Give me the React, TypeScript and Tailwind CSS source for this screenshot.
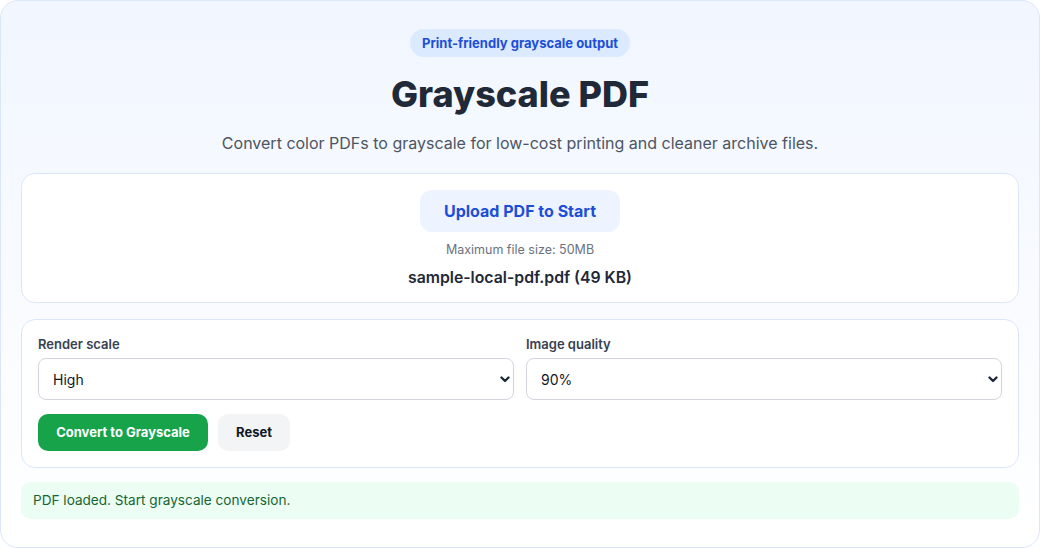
import React from "react";

function Chevron() {
  return (
    <svg
      className="pointer-events-none absolute right-[3px] top-1/2 -translate-y-1/2"
      width="12"
      height="12"
      viewBox="0 0 12 12"
      fill="none"
    >
      <path d="M2.5 4.5 L6 8 L9.5 4.5" stroke="#1f2937" strokeWidth="2.4" strokeLinecap="round" strokeLinejoin="round" />
    </svg>
  );
}

function Field({ label, value, options }: { label: string; value: string; options: string[] }) {
  return (
    <div className="flex flex-col">
      <label className="text-[13px] leading-5 font-semibold text-[#374151]">{label}</label>
      <div className="relative mt-1">
        <select
          defaultValue={value}
          className="h-[42px] w-full appearance-none rounded-lg border border-[#d1d5db] bg-white pl-[14px] pr-8 text-[14px] text-[#111827] outline-none"
        >
          {options.map((o) => (
            <option key={o}>{o}</option>
          ))}
        </select>
        <Chevron />
      </div>
    </div>
  );
}

export default function App() {
  return (
    <div
      className="h-[548px] w-[1040px] overflow-hidden bg-white"
      style={{ fontFamily: "Inter, 'Noto Sans', sans-serif" }}
    >
      <div className="flex h-[548px] flex-col rounded-[18px] border border-[#dbe6fb] bg-gradient-to-b from-[#f1f6ff] to-white px-5 pt-7">
        <div className="flex justify-center">
          <span className="rounded-full bg-[#dbeafe] px-3 py-[5px] text-[13px] leading-[18px] font-bold text-[#1d4ed8]">
            Print-friendly grayscale output
          </span>
        </div>
        <h1 className="mt-[15px] text-center text-[36px] leading-[44px] font-extrabold text-[#1f2937]">
          Grayscale PDF
        </h1>
        <p className="mt-[15px] text-center text-[16px] leading-6 text-[#4b5563]">
          Convert color PDFs to grayscale for low-cost printing and cleaner archive files.
        </p>

        <div className="mt-[18px] flex flex-col items-center rounded-[14px] border border-[#dbe6fb] bg-white pt-4 pb-[12px]">
          <button className="h-[42px] w-[200px] rounded-xl bg-[#eef4ff] text-[16px] font-bold text-[#1d4ed8]">
            Upload PDF to Start
          </button>
          <div className="mt-[9px] text-[12.5px] leading-[18px] text-[#6b7280]">Maximum file size: 50MB</div>
          <div className="mt-[7px] text-[15.8px] leading-6 font-semibold text-[#1f2937]">sample-local-pdf.pdf (49 KB)</div>
        </div>

        <div className="mt-[16px] rounded-[14px] border border-[#dbe6fb] bg-white px-4 pt-[14px] pb-4">
          <div className="grid grid-cols-2 gap-3">
            <Field label="Render scale" value="High" options={["Low", "Medium", "High"]} />
            <Field label="Image quality" value="90%" options={["70%", "80%", "90%", "100%"]} />
          </div>
          <div className="mt-[14px] flex gap-[10px]">
            <button className="h-[37px] w-[170px] rounded-[10px] bg-[#16a34a] text-[13px] font-bold text-white">
              Convert to Grayscale
            </button>
            <button className="h-[37px] w-[72px] rounded-[10px] bg-[#f3f4f6] text-[13px] font-bold text-[#111827]">
              Reset
            </button>
          </div>
        </div>

        <div className="mt-[14px] flex h-[37px] items-center rounded-[10px] bg-[#ecfdf3] px-3 text-[13.6px] text-[#166534]">
          PDF loaded. Start grayscale conversion.
        </div>
      </div>
    </div>
  );
}
